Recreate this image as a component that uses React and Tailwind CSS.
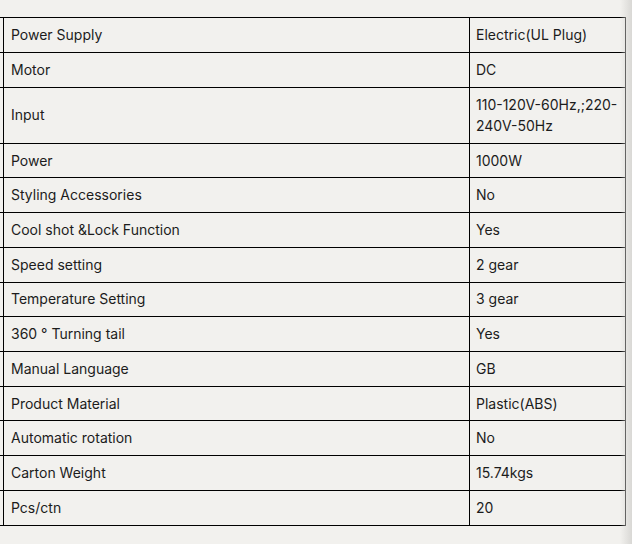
const rows = [
  ["Power Supply", "Electric(UL Plug)"],
  ["Motor", "DC"],
  ["Input", "110-120V-60Hz,;220-\n240V-50Hz"],
  ["Power", "1000W"],
  ["Styling Accessories", "No"],
  ["Cool shot &Lock Function", "Yes"],
  ["Speed setting", "2 gear"],
  ["Temperature Setting", "3 gear"],
  ["360 ° Turning tail", "Yes"],
  ["Manual Language", "GB"],
  ["Product Material", "Plastic(ABS)"],
  ["Automatic rotation", "No"],
  ["Carton Weight", "15.74kgs"],
  ["Pcs/ctn", "20"],
];

const App = () => {
  return (
    <div
      className="relative w-[632px] h-[544px] overflow-hidden bg-[#f2f1ee] text-[14px] text-[#1c1c1c]"
      style={{ fontFamily: "Inter, 'Noto Sans', sans-serif" }}
    >
      <div className="pt-[17px] flex">
        <div className="w-[626px] border-t border-b border-r border-black">
          {rows.map(([label, value], i) => (
            <div
              key={label}
              className={`flex ${i > 0 ? "border-t border-black" : ""} ${
                value.includes("\n") ? "h-[56px]" : i === 0 ? "h-[34px]" : "h-[34.73px]"
              }`}
            >
              <div className="w-[3px] shrink-0" />
              <div className="w-[467px] shrink-0 border-l border-r border-black flex items-center pl-[7px] pb-[1px]">
                {label}
              </div>
              <div className="flex-1 flex items-center pl-[6px] pb-[1px] leading-[21px] whitespace-pre-line">
                {value}
              </div>
            </div>
          ))}
        </div>
      </div>
      <div className="absolute top-0 right-0 h-full w-[12px] bg-gradient-to-r from-transparent to-[#d9d8d5]" />
    </div>
  );
};

export default App;
